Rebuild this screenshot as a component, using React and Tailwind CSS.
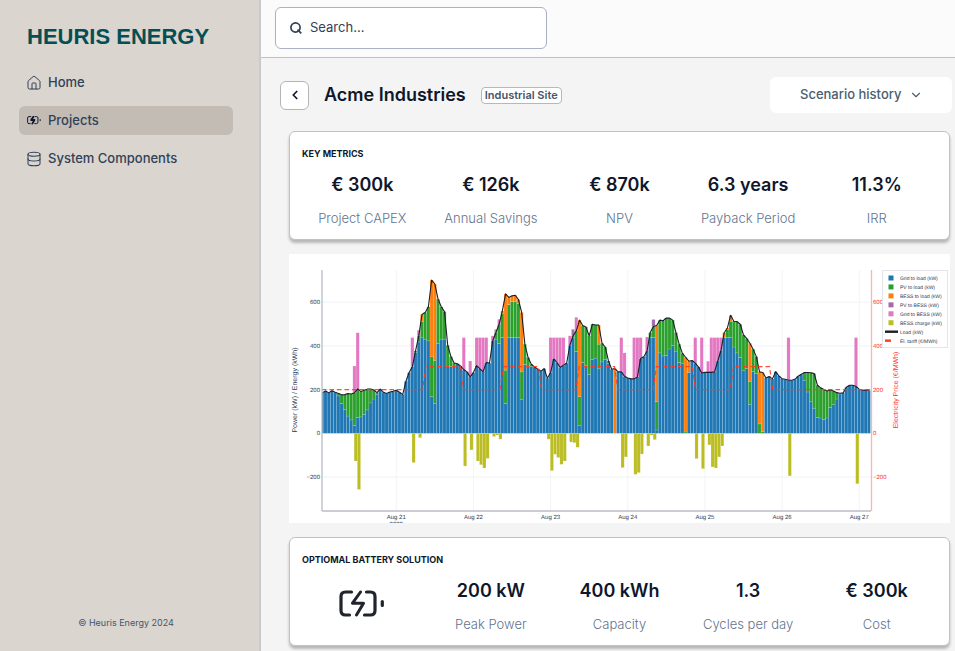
import React, { useState } from 'react';
import { House, Database, ChevronDown, ChevronLeft } from 'lucide-react';

const COLORS = {
  grid: '#1f77b4',
  pv: '#2ca02c',
  bess: '#ff7f0e',
  pvToBess: '#a569b0',
  gridToBess: '#e377c2',
  charge: '#bcbd22',
  load: '#1b1f2a',
  tariff: '#ff3b1f',
};

// Hourly site load in kW
const LOAD = [
  185, 194, 185, 195, 188, 182, 176, 177, 182, 180, 186, 203, 191, 197, 202, 203, 198, 186, 202, 188,
  182, 189, 192, 197, 188, 177, 238, 278, 305, 377, 446, 544, 553, 579, 701, 683, 614, 579, 557, 403,
  351, 322, 318, 308, 292, 281, 258, 278, 310, 296, 281, 324, 321, 423, 461, 499, 560, 638, 622, 629,
  632, 612, 553, 408, 347, 316, 304, 293, 284, 296, 252, 278, 341, 324, 301, 312, 321, 403, 446, 469,
  518, 493, 487, 446, 499, 496, 495, 412, 395, 331, 293, 296, 281, 281, 261, 253, 249, 249, 258, 342,
  350, 377, 461, 489, 493, 518, 515, 528, 527, 518, 461, 408, 366, 348, 330, 333, 321, 304, 276, 279,
  279, 279, 281, 331, 379, 460, 482, 540, 513, 511, 499, 450, 434, 412, 385, 351, 281, 278, 253, 260,
  249, 282, 263, 250, 247, 243, 243, 247, 261, 270, 278, 278, 277, 273, 220, 208, 200, 194, 198, 194,
  186, 183, 185, 211, 220, 220, 214, 202, 197, 198, 197,
];

// Grid supply for the hours in which it does not cover the whole load
const GRID = {
  5: 171, 6: 136, 7: 110, 8: 79, 9: 61, 10: 35, 11: 72, 12: 75, 13: 87, 14: 107, 15: 139, 16: 157, 17: 179,
  29: 370, 30: 418, 31: 440, 32: 431, 33: 423, 34: 168, 35: 136, 36: 412, 37: 431, 38: 431, 39: 305, 40: 305, 41: 305,
  54: 431, 55: 411, 56: 438, 57: 136, 58: 438, 59: 438, 60: 438, 61: 438, 62: 156, 63: 316, 64: 307, 65: 307,
  78: 438, 79: 374, 80: 37, 81: 324, 82: 312, 83: 270, 84: 337, 85: 344, 86: 295, 87: 327, 88: 337, 89: 319, 91: 0,
  102: 438, 103: 438, 104: 15, 105: 368, 106: 354, 107: 357, 108: 386, 109: 402, 110: 373, 111: 324, 112: 321,
  113: 0, 114: 279, 125: 438, 126: 438, 127: 438, 128: 395, 129: 368, 130: 347, 131: 286, 132: 296, 133: 133,
  134: 282, 135: 273, 136: 0, 137: 0,
  150: 243, 151: 189, 152: 144, 153: 115, 154: 72, 155: 70, 156: 63, 157: 70, 158: 118, 159: 131, 160: 157, 161: 180,
};

// Level up to which grid + PV reach, the battery covers the rest
const PV_TOP = {
  31: 512, 34: 350, 35: 334, 56: 549, 57: 289, 58: 589, 59: 602, 60: 602, 61: 594, 62: 281, 80: 168, 86: 408,
  91: 0, 104: 144, 113: 6, 114: 279, 125: 440, 126: 476, 127: 513, 133: 238, 136: 43, 137: 8,
};

const PV_TO_BESS = { 78: 476, 103: 521 };

const GRID_TO_BESS = {
  10: 308, 11: 460, 28: 438, 30: 472, 44: 438, 46: 331, 48: 438, 49: 438, 50: 438, 51: 438, 53: 446, 54: 476,
  55: 522, 71: 438, 72: 438, 73: 438, 74: 438, 75: 438, 77: 446, 79: 531, 93: 438, 94: 368, 97: 438, 98: 438,
  99: 438, 101: 441, 116: 438, 118: 438, 120: 330, 121: 438, 122: 438, 123: 438, 124: 438, 145: 438, 166: 438,
};

const CHARGE = {
  10: 127, 11: 257, 28: 134, 30: 20, 44: 150, 46: 76, 48: 127, 49: 144, 50: 159, 51: 115, 53: 15, 54: 8, 55: 27,
  70: 27, 71: 171, 72: 96, 73: 111, 74: 142, 75: 127, 77: 40, 78: 43, 79: 64, 93: 157, 94: 108, 97: 188, 98: 180,
  99: 95, 101: 58, 102: 8, 103: 29, 116: 116, 118: 162, 120: 53, 121: 154, 122: 159, 123: 108, 124: 58,
  145: 195, 166: 231,
};

const TARIFF = [
  [0, 200], [31.3, 200], [32.3, 305], [43, 305], [44, 200], [55.3, 200], [56.5, 305], [67.3, 305], [68.3, 200],
  [79, 200], [80, 305], [91, 305], [92, 200], [103, 200], [104, 305], [115.2, 305], [116.2, 200], [127, 200],
  [128, 305], [139.2, 305], [140.2, 200], [170.7, 200],
];

const LEGEND = [
  { label: 'Grid to load (kW)', color: COLORS.grid },
  { label: 'PV to load (kW)', color: COLORS.pv },
  { label: 'BESS to load (kW)', color: COLORS.bess },
  { label: 'PV to BESS (kW)', color: COLORS.pvToBess },
  { label: 'Grid to BESS (kW)', color: COLORS.gridToBess },
  { label: 'BESS charge (kW)', color: COLORS.charge },
  { label: 'Load (kW)', color: COLORS.load, line: 'solid' },
  { label: 'El. tariff (€/MWh)', color: COLORS.tariff, line: 'dash' },
];

const DAYS = ['Aug 21', 'Aug 22', 'Aug 23', 'Aug 24', 'Aug 25', 'Aug 26', 'Aug 27'];

const LEFT = 33;
const RIGHT = 582;
const ZERO = 179.3;
const HOUR = 3.215;

const xAt = (hour) => LEFT + HOUR * hour;
const yAt = (value) => ZERO - value * 0.2185;

const Bar = ({ hour, from, to, color, shift = -0.4 }) => {
  if (to - from < 1) return null;
  const x = Math.max(xAt(hour + shift), LEFT);
  return (
    <rect
      x={x}
      y={yAt(to)}
      width={xAt(hour + shift + 1) - x}
      height={yAt(from) - yAt(to)}
      fill={color}
      stroke="#ffffff"
      strokeOpacity="0.3"
      strokeWidth="0.5"
    />
  );
};

const EnergyChart = () => {
  const loadLine = LOAD.map((v, i) => `${xAt(i + 0.1)},${yAt(v)}`).join(' ');
  const tariffLine = TARIFF.map(([h, v]) => `${xAt(h)},${yAt(v)}`).join(' ');

  return (
    <svg
      viewBox="0 0 661 269"
      role="img"
      aria-label="Power, energy and electricity price by hour"
      textRendering="geometricPrecision"
      className="block w-full bg-white font-['Liberation_Sans',Arial,sans-serif]"
    >
      {/* Grid lines */}
      {[600, 400, 200, 0, -200].map((v) => (
        <line key={v} x1={LEFT} x2={RIGHT} y1={yAt(v)} y2={yAt(v)} stroke="#f1f2f4" />
      ))}
      {DAYS.map((day, i) => (
        <line key={day} x1={107.3 + i * 77.16} x2={107.3 + i * 77.16} y1="16" y2="256" stroke="#f3f4f6" />
      ))}

      {/* Stacked bars */}
      {LOAD.map((load, i) => {
        const grid = GRID[i] ?? load;
        const pv = PV_TOP[i] ?? load;
        return (
          <g key={i}>
            <Bar hour={i} from={0} to={grid} color={COLORS.grid} />
            <Bar hour={i} from={grid} to={pv} color={COLORS.pv} />
            <Bar hour={i} from={pv} to={load} color={COLORS.bess} />
            {PV_TO_BESS[i] && <Bar hour={i} from={load} to={PV_TO_BESS[i]} color={COLORS.pvToBess} />}
            {GRID_TO_BESS[i] && <Bar hour={i} from={load} to={GRID_TO_BESS[i]} color={COLORS.gridToBess} />}
            {CHARGE[i] && <Bar hour={i} from={-CHARGE[i]} to={0} color={COLORS.charge} shift={0} />}
          </g>
        );
      })}

      {/* Lines */}
      <polyline points={loadLine} fill="none" stroke={COLORS.load} strokeWidth="1.1" strokeLinejoin="round" />
      <polyline
        points={tariffLine}
        fill="none"
        stroke={COLORS.tariff}
        strokeOpacity="0.9"
        strokeWidth="1.2"
        strokeDasharray="4.500 3"
      />

      {/* Axes */}
      <line x1={LEFT} x2={LEFT} y1="16" y2="257" stroke="#b9bcc4" strokeWidth="1.3" />
      <line x1={LEFT} x2={RIGHT} y1="257" y2="257" stroke="#b9bcc4" strokeWidth="1.3" />
      <line x1={RIGHT + 0.5} x2={RIGHT + 0.5} y1="16" y2="257" stroke="#ffb3ad" strokeWidth="1.3" />

      {[600, 400, 200, 0, -200].map((v) => (
        <g key={v} fontSize="6">
          <text x="31" y={yAt(v) + 2} textAnchor="end" fill="#2f3b55">{v < 0 ? `−${-v}` : v}</text>
          <text x="584" y={yAt(v) + 2} fill="#ff3028">{v < 0 ? `−${-v}` : v}</text>
        </g>
      ))}
      {DAYS.map((day, i) => (
        <text key={day} x={107.3 + i * 77.16} y="265" textAnchor="middle" fontSize="6" fill="#2f3b55">{day}</text>
      ))}
      <text x="107.3" y="272" textAnchor="middle" fontSize="6" fill="#2f3b55">2023</text>
      <text transform="translate(8 136) rotate(-90)" textAnchor="middle" fontSize="7" fill="#2f3b55">
        Power (kW) / Energy (kWh)
      </text>
      <text transform="translate(609 136) rotate(-90)" textAnchor="middle" fontSize="7" fill="#ff3028">
        Electricity Price (€/MWh)
      </text>

      {/* Legend */}
      <rect x="593.5" y="16.5" width="65" height="77" fill="#ffffff" stroke="#e3e5ea" />
      {LEGEND.map(({ label, color, line }, i) => {
        const y = 24 + i * 8.95;
        return (
          <g key={label}>
            {!line && <rect x="599.5" y={y - 2.5} width="5" height="5" fill={color} />}
            {line === 'solid' && <rect x="596" y={y - 1.2} width="13" height="2.4" fill={color} />}
            {line === 'dash' && <rect x="596" y={y - 1.2} width="6" height="2.4" fill={color} />}
            <text x="611" y={y + 2} fontSize="5" fill="#2f3b55">{label}</text>
          </g>
        );
      })}
    </svg>
  );
};

const BatteryIcon = ({ className, boltWidth = 3 }) => (
  <svg
    viewBox="0 0 46 27"
    fill="none"
    stroke="currentColor"
    strokeWidth="3.2"
    strokeLinecap="round"
    strokeLinejoin="round"
    className={className}
    aria-hidden="true"
  >
    <path d="M12.5 2H6.5Q2 2 2 6.5V20.5Q2 25 6.5 25H10.5" />
    <path d="M27.5 2H31.5Q36 2 36 6.5V20.5Q36 25 31.5 25H25.5" />
    <path d="M21.5 2L13.5 13.2H24.5L17.5 25" strokeWidth={boltWidth} />
    <path d="M43.3 11.5V15.5" />
  </svg>
);

const SearchIcon = () => (
  <svg viewBox="0 0 12 12" fill="none" stroke="currentColor" strokeWidth="1.7" className="size-3" aria-hidden="true">
    <circle cx="5.5" cy="5.5" r="4.6" />
    <path d="M7.5 7.6L11.3 11.4" />
  </svg>
);

const NAV_ITEMS = [
  { label: 'Home', icon: <House className="size-4" strokeWidth={1.5} /> },
  { label: 'Projects', icon: <BatteryIcon className="w-4 px-px text-slate-900" boltWidth={6} />, active: true },
  { label: 'System Components', icon: <Database className="size-4" strokeWidth={1.6} /> },
];

const Sidebar = () => (
  <aside className="flex w-[261px] shrink-0 flex-col border-r-2 border-[#c9c9cf] bg-[#dad5ce] px-[19px] pt-6 pb-5">
    <h1 className="px-2 font-['Liberation_Sans',Arial,sans-serif] text-[22px] leading-[26px] font-bold text-[#064e55]">
      HEURIS ENERGY
    </h1>
    <nav className="mt-[18px] mr-[7px] flex flex-col gap-[9px]">
      {NAV_ITEMS.map(({ label, icon, active }) => (
        <a
          key={label}
          href="#"
          className={`flex h-[29px] items-center gap-[6px] rounded-md px-[7px] text-[13px] font-medium text-slate-700 ${active ? 'bg-[#c2bcb5]' : ''}`}
        >
          {icon}
          {label}
        </a>
      ))}
    </nav>
    <p className="mt-auto pr-[7px] text-center text-[9px] leading-4 text-slate-600">© Heuris Energy 2024</p>
  </aside>
);

const MetricCard = ({ title, items }) => (
  <section className="rounded-md border border-[#bcc1cc] bg-white px-2 pt-4 pb-[11px] shadow-[0_3px_3px_rgba(0,0,0,0.25)]">
    <h3 className="px-1 text-[9px] leading-3 font-bold text-slate-900">{title}</h3>
    <div className="mt-3 grid grid-cols-5">
      {items.map(({ value, label, icon }) => (
        <div key={label || 'icon'} className="flex flex-col items-center">
          {icon || (
            <>
              <p className="text-lg leading-[26px] font-semibold text-slate-900">{value}</p>
              <p className="mt-[10px] text-[13px] leading-5 font-light text-slate-500">{label}</p>
            </>
          )}
        </div>
      ))}
    </div>
  </section>
);

const KEY_METRICS = [
  { value: '€ 300k', label: 'Project CAPEX' },
  { value: '€ 126k', label: 'Annual Savings' },
  { value: '€ 870k', label: 'NPV' },
  { value: '6.3 years', label: 'Payback Period' },
  { value: '11.3%', label: 'IRR' },
];

const BATTERY = [
  { icon: <BatteryIcon className="mt-3 w-[46px] text-[#20242c]" /> },
  { value: '200 kW', label: 'Peak Power' },
  { value: '400 kWh', label: 'Capacity' },
  { value: '1.3', label: 'Cycles per day' },
  { value: '€ 300k', label: 'Cost' },
];

const App = () => {
  const [search, setSearch] = useState('');

  return (
    <div className="flex min-h-screen bg-[#f4f4f4] font-[Inter,sans-serif]">
      <Sidebar />

      <div className="flex min-w-0 flex-1 flex-col">
        {/* Top bar */}
        <header className="border-b border-[#bcc1cc] bg-[#fbfbfb] pt-[7px] pr-2 pb-2 pl-[14px]">
          <label className="flex h-[42px] w-[272px] items-center gap-2 rounded-md border border-[#a9b1c2] bg-white px-[14px] text-slate-700">
            <SearchIcon />
            <input
              type="text"
              aria-label="Search"
              placeholder="Search..."
              className="min-w-0 flex-1 bg-transparent text-[13px] outline-none placeholder:text-slate-700"
              value={search}
              onChange={(e) => setSearch(e.target.value)}
            />
          </label>
        </header>

        <main className="pb-1">
          {/* Project title */}
          <div className="flex items-center pt-[19px] pr-[3px] pl-[19px]">
            <button
              type="button"
              aria-label="Back"
              className="flex size-[29px] items-center justify-center rounded-md border border-[#b5b5b8] bg-white text-slate-900"
            >
              <ChevronLeft className="size-[14px]" strokeWidth={3} />
            </button>
            <h2 className="ml-[15px] text-lg leading-6 font-semibold text-slate-900">Acme Industries</h2>
            <span className="ml-[15px] rounded border border-[#b5b8be] bg-white px-[3px] text-[11px] leading-[15px] font-semibold text-slate-600">
              Industrial Site
            </span>
            <div className="relative ml-auto w-[182px]">
              <select
                aria-label="Scenario"
                className="h-9 w-full appearance-none rounded-md bg-white pr-10 pl-[30px] text-[13px] font-medium text-[#4a6072]"
              >
                <option>Scenario history</option>
              </select>
              <ChevronDown className="pointer-events-none absolute top-[11px] right-[29px] size-[14px] text-[#4a6072]" />
            </div>
          </div>

          <div className="flex flex-col gap-[14px] pt-[18px] pr-[5px] pl-7">
            <MetricCard title="KEY METRICS" items={KEY_METRICS} />
            <EnergyChart />
            <MetricCard title="OPTIOMAL BATTERY SOLUTION" items={BATTERY} />
          </div>
        </main>
      </div>
    </div>
  );
};

export default App;
